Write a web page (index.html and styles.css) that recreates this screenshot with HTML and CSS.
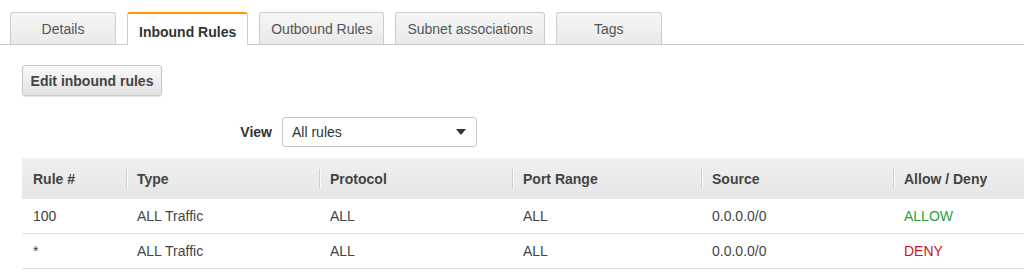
FILE: index.html
```html
<!DOCTYPE html>
<html lang="en">
<head>
    <meta charset="UTF-8">
    <meta name="viewport" content="width=device-width, initial-scale=1.0">
    <title>Network ACL - Inbound Rules</title>
    <link rel="stylesheet" href="styles.css">
</head>
<body>
    <div class="tabs">
        <div class="tab">Details</div>
        <div class="tab active">Inbound Rules</div>
        <div class="tab">Outbound Rules</div>
        <div class="tab">Subnet associations</div>
        <div class="tab">Tags</div>
    </div>

    <div class="panel">
        <button class="btn">Edit inbound rules</button>

        <div class="view-row">
            <label class="view-label">View</label>
            <div class="select">
                <span>All rules</span>
                <span class="caret"></span>
            </div>
        </div>

        <table class="rules">
            <colgroup>
                <col class="c-rule">
                <col class="c-mid">
                <col class="c-mid">
                <col class="c-port">
                <col class="c-src">
                <col>
            </colgroup>
            <thead>
                <tr>
                    <th>Rule #</th>
                    <th>Type</th>
                    <th>Protocol</th>
                    <th>Port Range</th>
                    <th>Source</th>
                    <th>Allow / Deny</th>
                </tr>
            </thead>
            <tbody>
                <tr>
                    <td>100</td>
                    <td>ALL Traffic</td>
                    <td>ALL</td>
                    <td>ALL</td>
                    <td>0.0.0.0/0</td>
                    <td class="allow">ALLOW</td>
                </tr>
                <tr>
                    <td>*</td>
                    <td>ALL Traffic</td>
                    <td>ALL</td>
                    <td>ALL</td>
                    <td>0.0.0.0/0</td>
                    <td class="deny">DENY</td>
                </tr>
            </tbody>
        </table>
    </div>
</body>
</html>
```

FILE: styles.css
```css
body {
    margin: 0;
    font-family: "Liberation Sans", Arial, sans-serif;
    font-size: 14px;
    color: #444;
    background: #fff;
}
.tabs {
    display: flex;
    gap: 11px;
    padding: 12px 0 0 10px;
    border-bottom: 1px solid #ccc;
}
.tab {
    box-sizing: border-box;
    min-width: 106px;
    height: 32px;
    margin-bottom: -1px;
    padding: 0 11px;
    display: flex;
    align-items: center;
    justify-content: center;
    color: #555;
    background: linear-gradient(to bottom, #f6f6f6, #e9e9e9);
    border: 1px solid #ccc;
    border-bottom: none;
    border-radius: 3px 3px 0 0;
}
.tab.active {
    min-width: 120px;
    padding-top: 4px;
    font-weight: bold;
    color: #333;
    background: #fff;
    border-top: 2px solid #f90;
    height: 33px;
}
.panel {
    padding: 20px 0 0 22px;
}
.btn {
    display: block;
    width: 140px;
    height: 31px;
    font-family: inherit;
    font-size: 14px;
    font-weight: bold;
    color: #444;
    background: linear-gradient(to bottom, #f9f9f9, #e2e2e2);
    border: 1px solid #c8c8c8;
    border-radius: 3px;
    box-shadow: 0 1px 1px rgba(0, 0, 0, 0.12);
    cursor: pointer;
}
.view-row {
    display: flex;
    align-items: center;
    gap: 10px;
    margin-top: 21px;
}
.view-label {
    width: 250px;
    text-align: right;
    font-weight: bold;
    color: #333;
}
.select {
    box-sizing: border-box;
    width: 195px;
    height: 30px;
    padding: 0 10px 0 9px;
    display: flex;
    align-items: center;
    justify-content: space-between;
    color: #333;
    border: 1px solid #c6c6c6;
    border-radius: 3px;
}
.caret {
    width: 0;
    height: 0;
    border-left: 5px solid transparent;
    border-right: 5px solid transparent;
    border-top: 6px solid #333;
}
.rules {
    width: 100%;
    margin-top: 11px;
    border-collapse: collapse;
    table-layout: fixed;
}
.c-rule { width: 104px; }
.c-mid { width: 193px; }
.c-port { width: 189px; }
.c-src { width: 192px; }
.rules th {
    position: relative;
    height: 41px;
    padding: 0 11px;
    text-align: left;
    font-weight: bold;
    color: #444;
    background: linear-gradient(to bottom, #f0f0f0, #e6e6e6);
}
.rules th + th::before {
    content: "";
    position: absolute;
    left: 0;
    top: 11px;
    bottom: 11px;
    width: 1px;
    background: #cfcfcf;
    box-shadow: 1px 0 0 #fafafa;
}
.rules td {
    height: 34px;
    padding: 0 11px;
    border-bottom: 1px solid #ddd;
    color: #444;
}
.rules td.allow { color: #27a23e; }
.rules td.deny { color: #d0111b; }
```
